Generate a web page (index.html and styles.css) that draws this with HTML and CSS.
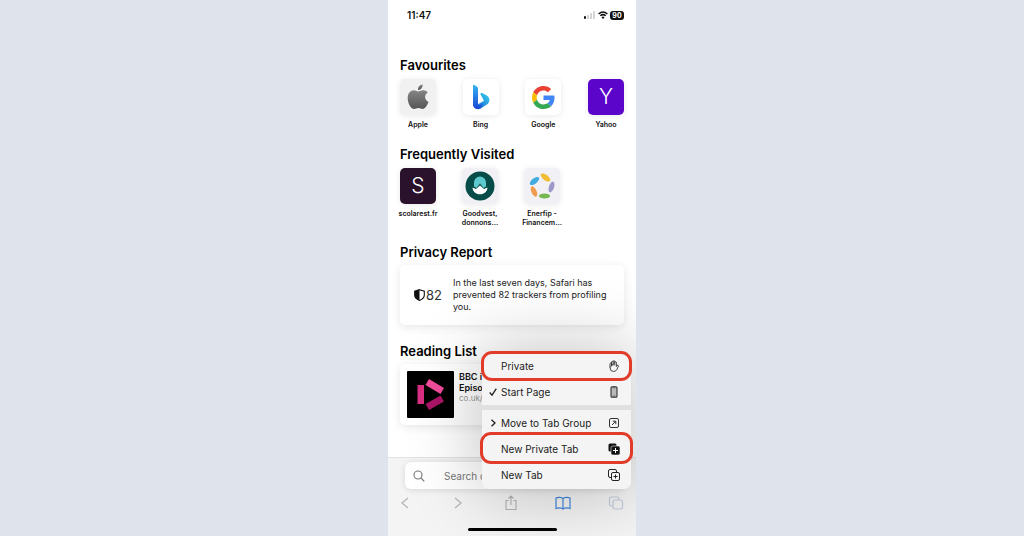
FILE: index.html
```html
<!DOCTYPE html>
<html lang="en">
<head>
<meta charset="utf-8">
<title>Start Page</title>
<meta name="viewport" content="width=device-width, initial-scale=1">
<link rel="stylesheet" href="styles.css">
</head>
<body>
<main class="phone">
  <header class="status">
    <time class="clock">11:47</time>
    <div class="indicators">
      <svg width="12" height="8" viewBox="0 0 12 8"><rect x="0" y="5" width="2" height="3" rx="1" fill="#111"/><g fill="#d4d4d4"><rect x="3" y="4" width="2" height="4" rx=".6"/><rect x="6" y="2" width="2" height="6" rx=".6"/><rect x="9" y="0" width="2" height="8" rx=".6"/></g></svg>
      <svg width="10" height="8" viewBox="0 0 10 8" fill="none" stroke="#111" stroke-width="1.5"><path d="M.6 3Q5-1 9.400 3M2.300 4.800Q5 2.400 7.700 4.800"/><path d="M5 5.300 6.500 6.500 5 8 3.500 6.500Z" fill="#111" stroke="none"/></svg>
      <span class="battery">90</span>
    </div>
  </header>

  <div class="content">
    <section>
      <h2>Favourites</h2>
      <div class="tiles">
        <a class="tile" href="#apple">
          <span class="icon icon-grey"><svg width="22" height="26" viewBox="0 0 22 26"><defs><linearGradient id="ag" x2="0" y2="1"><stop stop-color="#858585"/><stop offset="1" stop-color="#555"/></linearGradient></defs><g fill="url(#ag)"><path d="M11 7.500C12.500 7.500 14 6 16.500 6.200 18.600 6.300 20 7.400 20.800 8.600 16.800 11 17.500 16.300 21.500 18 20 22 17.800 25 15.700 25 14 25 13.300 24 11.400 24S8.700 25 7 25C4 25 .7 19.300.7 14.200.7 9 3.700 6.300 6.800 6.300 8.700 6.300 10 7.500 11 7.500Z"/><path d="M11 6C10.700 3 13 .7 15.600.4 16 3.300 13.600 6 11 6Z"/></g></svg></span>
          <span class="name">Apple</span>
        </a>
        <a class="tile" href="#bing">
          <span class="icon"><svg width="18" height="26" viewBox="0 0 18 26"><defs><linearGradient id="b1" x2="0" y2="1"><stop stop-color="#35b5f2"/><stop offset="1" stop-color="#1847d4"/></linearGradient><linearGradient id="b2" x1="1" y1="0" x2="0" y2="1"><stop stop-color="#39d7e7"/><stop offset="1" stop-color="#164fdc"/></linearGradient></defs><path d="M5.500 20.500 12 16.800 8.600 10.500C8 9.200 9 8.600 10.200 9L14.500 11.200C17.800 13 18.400 17.500 15.700 20L8.700 24.500C5.600 26.300 1.500 24.500 1 20.500Z" fill="url(#b2)"/><path d="M1 1.500C1 .6 1.600.4 2.300.9L5 2.700C5.700 3.200 6 3.700 6 4.600V20C6 21.500 7 21.600 8 21L11 19.500 8.500 24C5 26 1 24 1 20Z" fill="url(#b1)"/></svg></span>
          <span class="name">Bing</span>
        </a>
        <a class="tile" href="#google">
          <span class="icon"><svg width="23" height="23" viewBox="0 0 48 48"><path fill="#ea4335" d="M24 9.500c3.540 0 6.710 1.220 9.210 3.600l6.850-6.850C35.900 2.380 30.470 0 24 0 14.620 0 6.510 5.380 2.560 13.220l7.980 6.190C12.430 13.720 17.740 9.500 24 9.500z"/><path fill="#4285f4" d="M46.980 24.550c0-1.570-.15-3.090-.38-4.550H24v9.020h12.940c-.58 2.960-2.260 5.480-4.780 7.180l7.730 6c4.510-4.180 7.090-10.360 7.090-17.650z"/><path fill="#fbbc05" d="M10.530 28.590c-.48-1.450-.76-2.990-.76-4.590s.27-3.140.76-4.590l-7.980-6.190C.92 16.460 0 20.120 0 24c0 3.880.92 7.540 2.560 10.780l7.970-6.190z"/><path fill="#34a853" d="M24 48c6.480 0 11.930-2.130 15.890-5.810l-7.730-6c-2.150 1.450-4.920 2.300-8.160 2.300-6.260 0-11.570-4.220-13.470-9.910l-7.980 6.190C6.510 42.620 14.620 48 24 48z"/></svg></span>
          <span class="name">Google</span>
        </a>
        <a class="tile" href="#yahoo">
          <span class="icon letter yahoo">Y</span>
          <span class="name">Yahoo</span>
        </a>
      </div>
    </section>

    <section>
      <h2>Frequently Visited</h2>
      <div class="tiles frequent">
        <a class="tile" href="#scolarest">
          <span class="icon letter scolarest">S</span>
          <span class="name">scolarest.fr</span>
        </a>
        <a class="tile" href="#goodvest">
          <span class="icon icon-lilac"><svg width="30" height="30" viewBox="0 0 30 30"><circle cx="15" cy="15" r="14.500" fill="#064c49"/><path d="M9 15.500V11.500A6 6 0 0 1 21 11.500V15.500L18.500 17 15 12.500 11.500 17Z" fill="#5cc9cf"/><path d="M7.500 16.500 11 18 15 14.500 19 18 22.500 16.500C22.300 20.500 19 23.300 15 23.300S7.700 20.500 7.500 16.500Z" fill="#fff"/></svg></span>
          <span class="name">Goodvest,<br>donnons...</span>
        </a>
        <a class="tile" href="#enerfip">
          <span class="icon icon-lilac"><svg width="28" height="28" viewBox="0 0 28 28"><ellipse cx="6.500" cy="9" rx="5.600" ry="2.700" transform="rotate(-38 6.500 9)" fill="#43ace0"/><ellipse cx="17.500" cy="5.500" rx="5.600" ry="2.700" transform="rotate(38 17.500 5.500)" fill="#f0bd35"/><ellipse cx="23.500" cy="15" rx="5.600" ry="2.600" transform="rotate(-72 23.500 15)" fill="#9c98ca"/><ellipse cx="16.500" cy="24" rx="5.600" ry="2.500" fill="#78b850"/><ellipse cx="6" cy="19.500" rx="5.600" ry="2.600" transform="rotate(66 6 19.500)" fill="#f09b4e"/></svg></span>
          <span class="name">Enerfip -<br>Financem...</span>
        </a>
      </div>
    </section>

    <section>
      <h2>Privacy Report</h2>
      <div class="card privacy">
        <span class="count"><svg width="11" height="12" viewBox="0 0 11 12"><path d="M5.500.7 10.300 2.200V6C10.300 8.800 8 10.500 5.500 11.400 3 10.500.7 8.800.7 6V2.200Z" fill="#fff" stroke="#111" stroke-width="1.100"/><path d="M5.500.7V11.400C3 10.500.7 8.800.7 6V2.200Z" fill="#111"/></svg>82</span>
        <p>In the last seven days, Safari has prevented 82 trackers from profiling you.</p>
      </div>
    </section>

    <section>
      <h2>Reading List</h2>
      <a class="card reading" href="#bbc">
        <svg class="thumb" width="47" height="47" viewBox="0 0 47 47"><rect width="47" height="47" rx="1" fill="#000"/><path d="M10.500 14H17V33H10.500Z" fill="#d92f83"/><path d="M22 8 37 17 33.500 23 18.500 14Z" fill="#f34d9c"/><path d="M33.500 24.500 37 30.500 22 39 18.500 33Z" fill="#ab1468"/></svg>
        <span class="entry"><strong>BBC iPlayer<br>Episodes</strong><small>co.uk/iplayer</small></span>
      </a>
    </section>
  </div>

  <footer class="dock">
    <div class="search">
      <svg width="12" height="12" viewBox="0 0 12 12" fill="none" stroke="#777" stroke-width="1.100"><circle cx="5" cy="5" r="4"/><path d="M8 8 11.300 11.300"/></svg>
      <input type="text" aria-label="Search or enter website name" placeholder="Search or enter website">
    </div>
    <nav class="tools">
      <button aria-label="Back"><svg width="16" height="16" viewBox="0 0 16 16" fill="none" stroke="#b8b8b8" stroke-width="1.400"><path d="M11 3 5 8 11 13"/></svg></button>
      <button aria-label="Forward"><svg width="16" height="16" viewBox="0 0 16 16" fill="none" stroke="#b8b8b8" stroke-width="1.400"><path d="M5 3 11 8 5 13"/></svg></button>
      <button aria-label="Share"><svg width="16" height="16" viewBox="0 0 16 16" fill="none" stroke="#b4b4b4" stroke-width="1.100"><path d="M5.500 5.500H3V14.500H13V5.500H10.500M8 10V1.200M5.500 3.500 8 1 10.500 3.500"/></svg></button>
      <button aria-label="Bookmarks"><svg width="16" height="16" viewBox="0 0 16 16" fill="none" stroke="#3f86dc" stroke-width="1.200"><path d="M8 3.500C6.500 2 3 2 1 3V13.500C3 12.500 6.500 12.500 8 14 9.500 12.500 13 12.500 15 13.500V3C13 2 9.500 2 8 3.500ZM8 3.500V14"/></svg></button>
      <button aria-label="Tabs"><svg width="16" height="16" viewBox="0 0 16 16" fill="none" stroke="#c3cddb" stroke-width="1.200"><rect x="5" y="5" width="9.500" height="9" rx="2"/><path d="M5 11H3.500Q1.500 11 1.500 9V4Q1.500 2 3.500 2H9Q11 2 11 4V5"/></svg></button>
    </nav>
    <div class="home"></div>
  </footer>

  <div class="menu">
    <button class="ringed"><span class="mark"></span><span class="label">Private</span>
      <svg width="12" height="12" viewBox="0 0 12 12" fill="none" stroke="#333" stroke-width=".9"><path d="M2 7.500V3.500Q2.700 2.500 3.500 3.500V6M3.500 5V1.800Q4.300.8 5.100 1.800V5.500M5.100 2Q5.100.6 6 .6T6.800 2V5.500M6.800 2.300Q7.600 1.300 8.400 2.300V6.500L9.200 5.400Q10.600 4.800 10.300 6.300L9 9.300Q8 11.500 5.500 11.500 2 11.500 2 7.500Z"/></svg></button>
    <button><span class="mark"><svg width="8" height="8" viewBox="0 0 8 8" fill="none" stroke="#222" stroke-width="1.300"><path d="M.7 4.500 3 7.200 7.300.7"/></svg></span><span class="label">Start Page</span>
      <svg width="12" height="12" viewBox="0 0 12 12"><rect x="3" y=".7" width="6" height="10.600" rx="1" fill="#b8b8b8" stroke="#333" stroke-width="1.100"/><path d="M4.500 1.700H7.500M4.500 10.200H7.500" stroke="#333" stroke-width=".6"/></svg></button>
    <hr>
    <button><span class="mark"><svg width="8" height="8" viewBox="0 0 8 8" fill="none" stroke="#222" stroke-width="1.300"><path d="M2.500.7 6 4 2.500 7.300"/></svg></span><span class="label">Move to Tab Group</span>
      <svg width="12" height="12" viewBox="0 0 12 12" fill="none" stroke="#333" stroke-width="1"><rect x="1.500" y="1.500" width="9" height="9" rx="1.500"/><path d="M4 8 7.500 4.500M4.800 4.200H7.800V7.200"/></svg></button>
    <button class="ringed wide"><span class="mark"></span><span class="label">New Private Tab</span>
      <svg width="12" height="12" viewBox="0 0 12 12"><rect x=".5" y=".5" width="8" height="8" rx="1.500" fill="#111"/><rect x="3" y="3" width="9" height="9" rx="1.800" fill="#111" stroke="#eee" stroke-width=".6"/><path d="M7.500 5V10M5 7.500H10" stroke="#fff"/></svg></button>
    <button><span class="mark"></span><span class="label">New Tab</span>
      <svg width="12" height="12" viewBox="0 0 12 12" fill="none" stroke="#222" stroke-width="1"><rect x="3.500" y="3.500" width="8" height="8" rx="1.500"/><path d="M3.500 8.500H2Q.5 8.500.5 7V2Q.5.5 2 .5H7Q8.500.5 8.500 2V3.500M7.500 5.500V9.500M5.500 7.500H9.500"/></svg></button>
  </div>
</main>
</body>
</html>
```
FILE: styles.css
```css
* { box-sizing: border-box; }
body {
  margin: 0;
  min-height: 100vh;
  display: flex;
  justify-content: center;
  background: #dfe3ec;
  font-family: Inter, "Liberation Sans", sans-serif;
  color: #111;
}
h2, p { margin: 0; }
a { color: inherit; text-decoration: none; }
button { border: 0; padding: 0; background: none; font: inherit; color: inherit; text-align: left; }
svg { display: block; flex: none; }

.phone {
  position: relative;
  width: 100%;
  max-width: 248px;
  min-height: 100vh;
  display: flex;
  flex-direction: column;
  background: #fff;
  overflow: hidden;
}

.status {
  display: flex;
  align-items: center;
  justify-content: space-between;
  padding: 9px 12px 0 19px;
  height: 21px;
}
.clock { font-size: 10px; line-height: 12px; font-weight: 600; }
.indicators { display: flex; align-items: center; gap: 2px; }
.battery {
  width: 14px;
  border-radius: 3px;
  background: #111;
  color: #fff;
  font-size: 7px;
  line-height: 9px;
  font-weight: 700;
  text-align: center;
}

.content { padding: 36px 12px 0; flex: 1; }
h2 { font-size: 13px; line-height: 16px; font-weight: 600; color: #000; }

.tiles {
  display: flex;
  justify-content: space-between;
  margin: 6px 0 18px;
  height: 49px;
}
.tiles.frequent { justify-content: flex-start; gap: 26px; height: 68px; margin-bottom: 8px; }
.tile { width: 36px; display: flex; flex-direction: column; align-items: center; gap: 5px; }
.icon {
  width: 36px;
  height: 36px;
  flex: none;
  display: flex;
  align-items: center;
  justify-content: center;
  border-radius: 5px;
  background: #fff;
  box-shadow: 0 1px 6px rgba(0, 0, 0, .09);
}
.icon-grey { background: #f1f1f1; }
.icon-lilac { background: #f1f0f5; }
.letter { color: #fff; font-size: 21px; line-height: 36px; font-weight: 300; }
.yahoo { background: #5b05cb; }
.scolarest { background: #2a122c; }
.name { font-size: 7px; line-height: 9px; font-weight: 600; text-align: center; white-space: nowrap; }

.card { border-radius: 5px; background: #fff; box-shadow: 0 2px 10px rgba(0, 0, 0, .1); }
.privacy { display: flex; align-items: center; gap: 11px; margin: 5px 0 18px; padding: 12px 4px 12px 14px; }
.count { display: flex; align-items: center; gap: 1px; font-size: 13px; line-height: 16px; color: #333; }
.privacy p { font-size: 9px; line-height: 12px; color: #222; }
.reading { display: flex; gap: 5px; margin-top: 5px; padding: 7px; }
.entry { display: flex; flex-direction: column; font-size: 9px; line-height: 11px; white-space: nowrap; }
.entry strong { font-weight: 600; }
.entry small { font-size: 8px; color: #999; }

.dock { background: #f4f4f4; border-top: 1px solid #e2e2e2; padding: 4px 0 5px; }
.search {
  display: flex;
  align-items: center;
  height: 27px;
  margin: 0 11px 0 17px;
  padding: 0 8px;
  gap: 19px;
  border-radius: 6px;
  background: #fff;
  box-shadow: 0 1px 6px rgba(0, 0, 0, .12);
}
.search input { flex: 1; min-width: 0; border: 0; padding: 0; background: none; font: inherit; font-size: 10px; outline: 0; }
.search input::placeholder { color: #777; opacity: 1; }
.tools { display: flex; justify-content: space-between; margin: 6px 12px 17px 9px; }
.home { width: 89px; height: 3px; margin: 0 auto; border-radius: 2px; background: #000; }

/* Pop-up above the tabs button */
.menu {
  position: absolute;
  right: 5px;
  bottom: 47px;
  width: 149px;
  padding: 1px 0;
  border-radius: 7px;
  background: #f4f4f4;
  box-shadow: 0 0 70px 4px rgba(0, 0, 0, .24);
}
.menu button {
  position: relative;
  display: flex;
  align-items: center;
  width: 100%;
  height: 26px;
  padding: 0 11px 0 7px;
  font-size: 10px;
  line-height: 14px;
  color: #222;
}
.mark { width: 12px; }
.label { flex: 1; }
.menu hr { height: 5px; margin: 0; border: 0; background: #e0e0e0; }
.ringed::after {
  content: "";
  position: absolute;
  inset: -2px -1px;
  border: 3px solid #e13c29;
  border-radius: 11px;
}
.ringed.wide::after { inset: -4px -2px -2px; }
```
